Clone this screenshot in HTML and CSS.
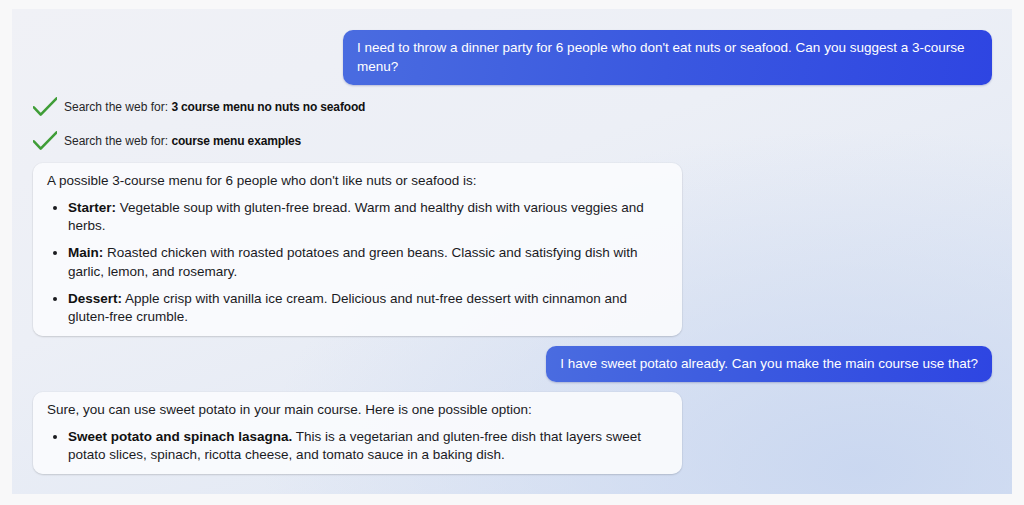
FILE: index.html
```html
<!DOCTYPE html>
<html lang="en">
<head>
<meta charset="utf-8">
<title>Chat</title>
<link rel="stylesheet" href="styles.css">
</head>
<body>
<div class="panel">
  <div class="bubble user">I need to throw a dinner party for 6 people who don't eat nuts or seafood. Can you suggest a 3-course menu?</div>
  <div class="search">
    <svg class="check" viewBox="0 0 24 24" width="24" height="24"><path d="M0.8 12.3 L7.7 19.6 L23.6 3.4" fill="none" stroke="#3f9d37" stroke-width="2.6" stroke-linecap="round" stroke-linejoin="round"/></svg>
    <span>Search the web for: <b>3 course menu no nuts no seafood</b></span>
  </div>
  <div class="search">
    <svg class="check" viewBox="0 0 24 24" width="24" height="24"><path d="M0.8 12.3 L7.7 19.6 L23.6 3.4" fill="none" stroke="#3f9d37" stroke-width="2.6" stroke-linecap="round" stroke-linejoin="round"/></svg>
    <span>Search the web for: <b>course menu examples</b></span>
  </div>
  <div class="card">
    <p>A possible 3-course menu for 6 people who don't like nuts or seafood is:</p>
    <ul>
      <li><b>Starter:</b> Vegetable soup with gluten-free bread. Warm and healthy dish with various veggies and herbs.</li>
      <li><b>Main:</b> Roasted chicken with roasted potatoes and green beans. Classic and satisfying dish with garlic, lemon, and rosemary.</li>
      <li><b>Dessert:</b> Apple crisp with vanilla ice cream. Delicious and nut-free dessert with cinnamon and gluten-free crumble.</li>
    </ul>
  </div>
  <div class="bubble user">I have sweet potato already. Can you make the main course use that?</div>
  <div class="card">
    <p>Sure, you can use sweet potato in your main course. Here is one possible option:</p>
    <ul>
      <li><b>Sweet potato and spinach lasagna.</b> This is a vegetarian and gluten-free dish that layers sweet potato slices, spinach, ricotta cheese, and tomato sauce in a baking dish.</li>
    </ul>
  </div>
</div>
</body>
</html>
```
FILE: styles.css
```css
* { box-sizing: border-box; }
html, body { margin: 0; padding: 0; }
body {
  background: #f8f8f9;
  font-family: "Liberation Sans", Arial, sans-serif;
  color: #1b1b1f;
  width: 1024px;
  height: 505px;
  overflow: hidden;
}
.panel {
  margin: 9px 12px 0 12px;
  width: 1000px;
  height: 485px;
  padding: 21px 20px 19px 21px;
  display: flex;
  flex-direction: column;
  gap: 10px;
  background:
    radial-gradient(ellipse 60% 70% at 85% 95%, rgba(200, 214, 240, 0.9), rgba(200, 214, 240, 0) 100%),
    linear-gradient(160deg, #f0f1f6 0%, #eceff6 40%, #dde5f3 100%);
}
.bubble.user {
  align-self: flex-end;
  max-width: 649px;
  padding: 9px 14px 8.5px 14px;
  border-radius: 10px;
  color: #ffffff;
  font-size: 13.5px;
  line-height: 18.5px;
  background: linear-gradient(100deg, #4a6ce0 0%, #3a58e0 50%, #2e45e2 100%);
  box-shadow: 0 1px 2px rgba(30, 40, 120, 0.25);
}
.search {
  display: flex;
  align-items: center;
  height: 24px;
  gap: 7px;
  font-size: 12px;
  color: #262628;
}
.search b { color: #111; letter-spacing: -0.15px; }
.check { flex: none; display: block; }
.card {
  width: 649px;
  padding: 9px 14px 9px 14px;
  background: rgba(250, 251, 253, 0.92);
  border-radius: 10px;
  box-shadow: 0 1px 2px rgba(0, 0, 0, 0.14), 0 0 0 1px rgba(0, 0, 0, 0.02);
  font-size: 13.5px;
  line-height: 18.5px;
}
.card p { margin: 0; }
.card ul {
  margin: 8.5px 0 0 0;
  padding: 0 0 0 21px;
}
.card li + li { margin-top: 8.5px; }
.card b { color: #111; }
```
